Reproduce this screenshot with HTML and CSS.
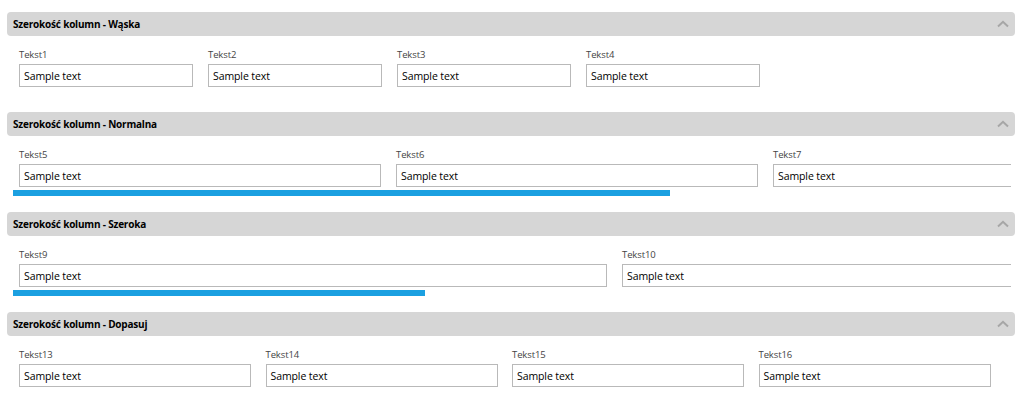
FILE: index.html
```html
<!DOCTYPE html>
<html lang="pl">
<head>
<meta charset="utf-8">
<title>Szerokość kolumn</title>
<link rel="stylesheet" href="styles.css">
</head>
<body>
<div class="page">
  <section class="group">
    <div class="group-header">
      <span class="group-title">Szerokość kolumn - Wąska</span>
      <svg class="chevron" width="12" height="8" viewBox="0 0 12 8"><path d="M1 6.5 L6 1.8 L11 6.5" fill="none" stroke="#a6a6a6" stroke-width="2"/></svg>
    </div>
    <div class="group-body">
      <div class="row cols-narrow">
        <div class="field"><label>Tekst1</label><div class="input">Sample text</div></div>
        <div class="field"><label>Tekst2</label><div class="input">Sample text</div></div>
        <div class="field"><label>Tekst3</label><div class="input">Sample text</div></div>
        <div class="field"><label>Tekst4</label><div class="input">Sample text</div></div>
      </div>
      <div class="scroll"></div>
    </div>
  </section>

  <section class="group">
    <div class="group-header">
      <span class="group-title">Szerokość kolumn - Normalna</span>
      <svg class="chevron" width="12" height="8" viewBox="0 0 12 8"><path d="M1 6.5 L6 1.8 L11 6.5" fill="none" stroke="#a6a6a6" stroke-width="2"/></svg>
    </div>
    <div class="group-body">
      <div class="row cols-normal">
        <div class="field"><label>Tekst5</label><div class="input">Sample text</div></div>
        <div class="field"><label>Tekst6</label><div class="input">Sample text</div></div>
        <div class="field"><label>Tekst7</label><div class="input">Sample text</div></div>
      </div>
      <div class="scroll"><div class="thumb" style="width:657px"></div></div>
    </div>
  </section>

  <section class="group">
    <div class="group-header">
      <span class="group-title">Szerokość kolumn - Szeroka</span>
      <svg class="chevron" width="12" height="8" viewBox="0 0 12 8"><path d="M1 6.5 L6 1.8 L11 6.5" fill="none" stroke="#a6a6a6" stroke-width="2"/></svg>
    </div>
    <div class="group-body">
      <div class="row cols-wide">
        <div class="field"><label>Tekst9</label><div class="input">Sample text</div></div>
        <div class="field"><label>Tekst10</label><div class="input">Sample text</div></div>
      </div>
      <div class="scroll"><div class="thumb" style="width:412px"></div></div>
    </div>
  </section>

  <section class="group">
    <div class="group-header">
      <span class="group-title">Szerokość kolumn - Dopasuj</span>
      <svg class="chevron" width="12" height="8" viewBox="0 0 12 8"><path d="M1 6.5 L6 1.8 L11 6.5" fill="none" stroke="#a6a6a6" stroke-width="2"/></svg>
    </div>
    <div class="group-body">
      <div class="row cols-fit">
        <div class="field"><label>Tekst13</label><div class="input">Sample text</div></div>
        <div class="field"><label>Tekst14</label><div class="input">Sample text</div></div>
        <div class="field"><label>Tekst15</label><div class="input">Sample text</div></div>
        <div class="field"><label>Tekst16</label><div class="input">Sample text</div></div>
      </div>
      <div class="scroll"></div>
    </div>
  </section>
</div>
</body>
</html>
```

FILE: styles.css
```css
html, body {
  margin: 0;
  padding: 0;
  background: #ffffff;
}

body {
  font-family: "Open Sans", "Noto Sans", "Liberation Sans", sans-serif;
  color: #000;
}

.page {
  padding: 12px 9px 0 7px;
}

.group {
  height: 100px;
}

.group-header {
  height: 24px;
  background: #d6d6d6;
  border-radius: 4px;
  display: flex;
  align-items: center;
  justify-content: space-between;
  padding: 0 6px 0 6px;
  box-sizing: border-box;
}

.group-title {
  font-size: 10px;
  font-weight: 700;
  color: #000;
  letter-spacing: -0.2px;
}

.chevron {
  display: block;
}

.group-body {
  padding: 10px 0 0 6px;
  margin-right: 4px;
  overflow: hidden;
}

.row {
  display: flex;
  gap: 15px;
  padding-left: 6px;
}

.field {
  flex: none;
  display: flex;
  flex-direction: column;
}

.cols-narrow .field { width: 174px; }
.cols-normal .field { width: 362px; }
.cols-wide .field { width: 588px; }
.cols-fit .field { width: 232px; }
.cols-fit { gap: 14.5px; }

.field label {
  height: 18px;
  line-height: 18px;
  font-size: 9.5px;
  color: #444;
  letter-spacing: -0.1px;
}

.input {
  height: 23px;
  box-sizing: border-box;
  border: 1px solid #b9b9b9;
  padding: 1px 4px 0;
  font-size: 10.5px;
  line-height: 21px;
  color: #000;
  letter-spacing: -0.1px;
  background: #fff;
}

.scroll {
  height: 6px;
  margin-top: 3px;
}

.thumb {
  height: 6px;
  background: #1ba0e1;
}
```
